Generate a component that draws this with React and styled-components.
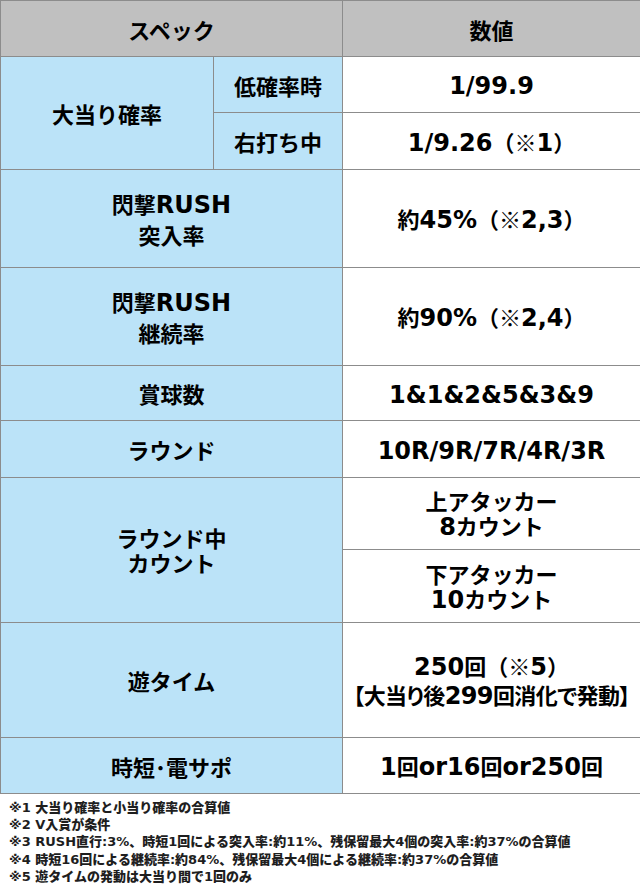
import React from "react";
import styled, { createGlobalStyle } from "styled-components";

const Global = createGlobalStyle`
  html, body { margin: 0; padding: 0; background: #ffffff; }
  body { font-family: "Noto Sans CJK JP", sans-serif; }
`;

const Page = styled.div`
  width: 640px;
  display: flex;
  flex-direction: column;
`;

const Table = styled.table`
  width: 640px;
  border-collapse: collapse;
  table-layout: fixed;
  font-family: "Noto Sans CJK JP", sans-serif;
  font-weight: 700;
  font-size: 22px;
  color: #000;
`;

const Row = styled.tr`
  height: ${(p) => p.$h}px;
`;

const Cell = styled.td`
  border: 1px solid #8c8c8c;
  padding: 0;
  text-align: center;
  vertical-align: middle;
  line-height: ${(p) => p.$lh || 26}px;
  background: ${(p) =>
    p.$kind === "head" ? "#c0c0c0" : p.$kind === "label" ? "#bbe3f8" : "#ffffff"};
`;

const Line = styled.span`
  display: block;
  white-space: nowrap;
  ${(p) =>
    p.$tight &&
    `font-feature-settings: "palt"; letter-spacing: -0.6px;`}
`;

const Num = styled.span`
  font-family: "DejaVu Sans", sans-serif;
  font-size: 24px;
  line-height: 1;
`;

const Notes = styled.div`
  display: flex;
  flex-direction: column;
  padding: 5px 0 0 9px;
  font-family: "DejaVu Sans", "Noto Sans CJK JP", sans-serif;
  font-weight: 900;
  font-size: 13px;
  line-height: 17.2px;
  color: #1e1e1e;
`;

const Note = styled.div`
  white-space: nowrap;
`;

function Txt({ lines, tight }) {
  return lines.map((line, i) => (
    <Line key={i} $tight={tight && i === lines.length - 1}>
      {line.split(/([0-9A-Za-z/.,%&]+)/).map((part, j) =>
        j % 2 === 1 ? <Num key={j}>{part}</Num> : part
      )}
    </Line>
  ));
}

export default function App() {
  return (
    <Page>
      <Global />
      <Table>
        <colgroup>
          <col style={{ width: 213 }} />
          <col style={{ width: 129 }} />
          <col style={{ width: 298 }} />
        </colgroup>
        <tbody>
          <Row $h={56}>
            <Cell as="th" colSpan={2} $kind="head"><Txt lines={["スペック"]} /></Cell>
            <Cell as="th" $kind="head"><Txt lines={["数値"]} /></Cell>
          </Row>
          <Row $h={56}>
            <Cell rowSpan={2} $kind="label"><Txt lines={["大当り確率"]} /></Cell>
            <Cell $kind="label"><Txt lines={["低確率時"]} /></Cell>
            <Cell><Txt lines={["1/99.9"]} /></Cell>
          </Row>
          <Row $h={57}>
            <Cell $kind="label"><Txt lines={["右打ち中"]} /></Cell>
            <Cell><Txt lines={["1/9.26（※1）"]} /></Cell>
          </Row>
          <Row $h={98}>
            <Cell colSpan={2} $kind="label" $lh={31}><Txt lines={["閃撃RUSH", "突入率"]} /></Cell>
            <Cell><Txt lines={["約45%（※2,3）"]} /></Cell>
          </Row>
          <Row $h={98}>
            <Cell colSpan={2} $kind="label" $lh={31}><Txt lines={["閃撃RUSH", "継続率"]} /></Cell>
            <Cell><Txt lines={["約90%（※2,4）"]} /></Cell>
          </Row>
          <Row $h={55}>
            <Cell colSpan={2} $kind="label"><Txt lines={["賞球数"]} /></Cell>
            <Cell><Txt lines={["1&1&2&5&3&9"]} /></Cell>
          </Row>
          <Row $h={57}>
            <Cell colSpan={2} $kind="label"><Txt lines={["ラウンド"]} /></Cell>
            <Cell><Txt lines={["10R/9R/7R/4R/3R"]} /></Cell>
          </Row>
          <Row $h={72}>
            <Cell colSpan={2} rowSpan={2} $kind="label" $lh={25}><Txt lines={["ラウンド中", "カウント"]} /></Cell>
            <Cell $lh={25}><Txt lines={["上アタッカー", "8カウント"]} /></Cell>
          </Row>
          <Row $h={73}>
            <Cell $lh={25}><Txt lines={["下アタッカー", "10カウント"]} /></Cell>
          </Row>
          <Row $h={115}>
            <Cell colSpan={2} $kind="label"><Txt lines={["遊タイム"]} /></Cell>
            <Cell $lh={29}><Txt tight lines={["250回（※5）", "【大当り後299回消化で発動】"]} /></Cell>
          </Row>
          <Row $h={56}>
            <Cell colSpan={2} $kind="label"><Txt lines={["時短･電サポ"]} /></Cell>
            <Cell><Txt lines={["1回or16回or250回"]} /></Cell>
          </Row>
        </tbody>
      </Table>
      <Notes>
        <Note>※1 大当り確率と小当り確率の合算値</Note>
        <Note>※2 V入賞が条件</Note>
        <Note>※3 RUSH直行:3%、時短1回による突入率:約11%、残保留最大4個の突入率:約37%の合算値</Note>
        <Note>※4 時短16回による継続率:約84%、残保留最大4個による継続率:約37%の合算値</Note>
        <Note>※5 遊タイムの発動は大当り間で1回のみ</Note>
      </Notes>
    </Page>
  );
}
